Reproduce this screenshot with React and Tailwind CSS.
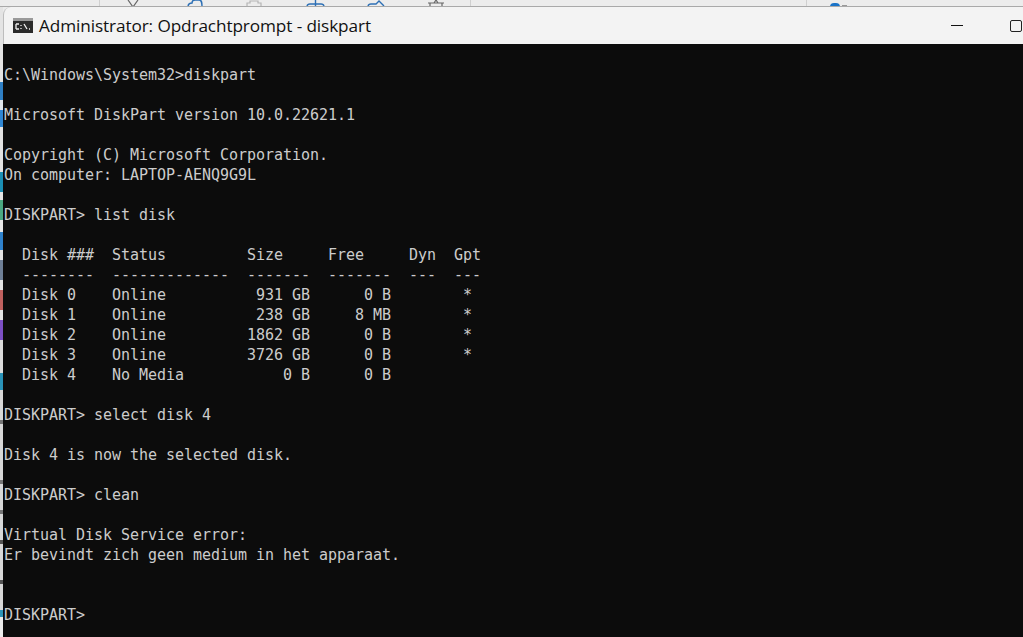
const lines = [
  "C:\\Windows\\System32>diskpart",
  "",
  "Microsoft DiskPart version 10.0.22621.1",
  "",
  "Copyright (C) Microsoft Corporation.",
  "On computer: LAPTOP-AENQ9G9L",
  "",
  "DISKPART> list disk",
  "",
  "  Disk ###  Status         Size     Free     Dyn  Gpt",
  "  --------  -------------  -------  -------  ---  ---",
  "  Disk 0    Online          931 GB      0 B        *",
  "  Disk 1    Online          238 GB     8 MB        *",
  "  Disk 2    Online         1862 GB      0 B        *",
  "  Disk 3    Online         3726 GB      0 B        *",
  "  Disk 4    No Media           0 B      0 B",
  "",
  "DISKPART> select disk 4",
  "",
  "Disk 4 is now the selected disk.",
  "",
  "DISKPART> clean",
  "",
  "Virtual Disk Service error:",
  "Er bevindt zich geen medium in het apparaat.",
  "",
  "",
  "DISKPART> ",
];

// bits of the desktop that peek out left of the window
const edge = [
  { h: "h-[75px]", c: "bg-[#e4e4e4]" },
  { h: "h-[18px]", c: "bg-[#2f7fc4]" },
  { h: "h-[10px]", c: "bg-[#dfe6ec]" },
  { h: "h-[17px]", c: "bg-[#2f86d2]" },
  { h: "h-[45px]", c: "bg-[#e2e2e2]" },
  { h: "h-[20px]", c: "bg-[#1b8fb5]" },
  { h: "h-[8px]", c: "bg-[#e6e6e6]" },
  { h: "h-[20px]", c: "bg-[#4aa882]" },
  { h: "h-[12px]", c: "bg-[#e6e6e6]" },
  { h: "h-[18px]", c: "bg-[#2f82cc]" },
  { h: "h-[10px]", c: "bg-[#e2e2e2]" },
  { h: "h-[20px]", c: "bg-[#6f8097]" },
  { h: "h-[10px]", c: "bg-[#e2e2e2]" },
  { h: "h-[20px]", c: "bg-[#c0615f]" },
  { h: "h-[10px]", c: "bg-[#e2e2e2]" },
  { h: "h-[20px]", c: "bg-[#7c4fc4]" },
  { h: "h-[33px]", c: "bg-[#dcdcdc]" },
  { h: "h-[17px]", c: "bg-[#2a93b8]" },
  { h: "h-[30px]", c: "bg-[#d8d8d8]" },
  { h: "h-[4px]", c: "bg-[#777777]" },
  { h: "h-[56px]", c: "bg-[#d8d8d8]" },
  { h: "h-[4px]", c: "bg-[#777777]" },
  { h: "h-[26px]", c: "bg-[#d8d8d8]" },
  { h: "h-[4px]", c: "bg-[#777777]" },
  { h: "h-[26px]", c: "bg-[#d8d8d8]" },
  { h: "h-[4px]", c: "bg-[#555555]" },
  { h: "h-[36px]", c: "bg-[#d8d8d8]" },
  { h: "h-[4px]", c: "bg-[#555555]" },
  { h: "h-[26px]", c: "bg-[#d8d8d8]" },
  { h: "h-[7px]", c: "bg-[#2a93b8]" },
];

function TopStrip() {
  return (
    <div className="h-[7px] flex bg-[#ececec] border-b border-[#a9a9a9] overflow-hidden shrink-0">
      <div className="w-[100px] h-full border-r border-[#d0d0d0]" />
      <svg className="ml-[27px]" width="13" height="7" viewBox="0 0 13 7" fill="none" stroke="#666" strokeWidth="1.2">
        <path d="M1 0l5 7 5-7" />
      </svg>
      <svg className="ml-[47px]" width="18" height="7" viewBox="0 0 18 7" fill="none" stroke="#2c6fb5" strokeWidth="1.4">
        <path d="M1 7c0-3 2-4 4-4 0-2 1-3 3-3h4c3 0 3 3 3 7" />
      </svg>
      <svg className="ml-[41px]" width="16" height="7" viewBox="0 0 16 7" fill="none" stroke="#b5b5b5" strokeWidth="1.2">
        <path d="M1 7V3h3V1h8v2h3v4" />
      </svg>
      <svg className="ml-[44px]" width="19" height="7" viewBox="0 0 19 7" fill="none" stroke="#2c6fb5" strokeWidth="1.4">
        <path d="M1 7c0-2 1-3 3-3h11c2 0 3 1 3 3M9.500 0v7" />
      </svg>
      <svg className="ml-[42px]" width="18" height="7" viewBox="0 0 18 7" fill="none" stroke="#2c6fb5" strokeWidth="1.4">
        <path d="M1 7c0-2 1-3 3-3h5l3-3 5 5" />
      </svg>
      <svg className="ml-[42px]" width="18" height="7" viewBox="0 0 18 7" fill="none" stroke="#666" strokeWidth="1.2">
        <path d="M1 3h16M3 3v4M15 3v4M7 3l2-3 2 3" />
      </svg>
      <div className="ml-[25px] w-[1px] h-full bg-[#d0d0d0]" />
      <div className="ml-[335px] w-[1px] h-full bg-[#d0d0d0]" />
      <div className="ml-[23px] mt-[3px] w-[10px] h-[8px] rounded-full bg-[#1a73c8]" />
      <div className="ml-[2px] mt-[5px] w-[5px] h-[2px] bg-[#999999]" />
    </div>
  );
}

function TitleBar() {
  return (
    <div className="h-[37px] flex items-center bg-[#f3f3f3] rounded-tl-[8px] border-l border-[#bdbdbd] shrink-0">
      <svg className="ml-[9px]" width="20" height="15" viewBox="0 0 20 15">
        <rect width="20" height="15" fill="#2b2b2b" />
        <rect width="20" height="3" fill="#9a9a9a" />
        <path d="M3 6H6M3 6v5M3 11H6" stroke="#f0f0f0" strokeWidth="1.3" fill="none" />
        <path d="M8 7v1M8 10v1M11 6l3 5M16 11h1" stroke="#f0f0f0" strokeWidth="1.3" fill="none" />
      </svg>
      <span className="ml-[6px] text-[17.200px] text-[#111111] font-['Open_Sans',sans-serif] tracking-[-0.1px] whitespace-nowrap">
        Administrator: Opdrachtprompt - diskpart
      </span>
      <div className="ml-auto w-[12px] h-[1px] bg-[#111111] mr-[47px]" />
      <div className="w-[12px] h-[12px] mr-[1px] border border-[#222222] rounded-[2px]" />
    </div>
  );
}

export default function App() {
  return (
    <div className="w-[1023px] h-[637px] overflow-hidden flex flex-col bg-[#ececec]">
      <TopStrip />
      <div className="flex flex-1 min-h-0">
        <div className="w-[3px] flex flex-col shrink-0">
          {edge.map((e, i) => (
            <div key={i} className={`${e.h} ${e.c} shrink-0`} />
          ))}
        </div>
        <div className="flex-1 flex flex-col min-w-0">
          <TitleBar />
          <pre className="flex-1 bg-[#0c0c0c] text-[#cccccc] pt-[21px] border-l border-[#0c0c0c] text-[15px] leading-[20px] tracking-[-0.03px] font-['DejaVu_Sans_Mono',monospace]">
            {lines.join("\n")}
          </pre>
        </div>
      </div>
    </div>
  );
}
